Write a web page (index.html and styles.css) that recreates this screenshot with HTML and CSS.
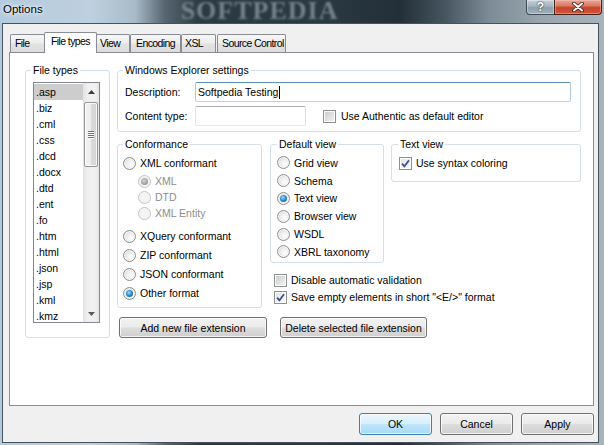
FILE: index.html
```html
<!DOCTYPE html>
<html>
<head>
<meta charset="utf-8">
<title>Options</title>
<link rel="stylesheet" href="styles.css">
</head>
<body>
<div class="window">
  <div class="titlebar">
    <span class="title">Options</span>
    <span class="wall-mark">SOFTPEDIA</span>
    <div class="caption-buttons">
      <span class="cap-btn help">?</span>
      <span class="cap-btn close">
        <svg width="12" height="10" viewBox="0 0 12 10"><path d="M2 1.5 L10 8.5 M10 1.5 L2 8.5" stroke="#3a1a14" stroke-width="3.6" stroke-linecap="round"/><path d="M2 1.5 L10 8.5 M10 1.5 L2 8.5" stroke="#ffffff" stroke-width="2" stroke-linecap="round"/></svg>
      </span>
    </div>
  </div>

  <div class="client">
    <div class="tabs">
      <div class="tab t-file">File</div>
      <div class="tab t-types active">File types</div>
      <div class="tab t-view">View</div>
      <div class="tab t-enc">Encoding</div>
      <div class="tab t-xsl">XSL</div>
      <div class="tab t-sc">Source Control</div>
    </div>

    <div class="panel">
      <div class="group g-files">
        <div class="group-title">File types</div>
        <div class="listbox">
          <ul class="items">
            <li class="sel">.asp</li>
            <li>.biz</li>
            <li>.cml</li>
            <li>.css</li>
            <li>.dcd</li>
            <li>.docx</li>
            <li>.dtd</li>
            <li>.ent</li>
            <li>.fo</li>
            <li>.htm</li>
            <li>.html</li>
            <li>.json</li>
            <li>.jsp</li>
            <li>.kml</li>
            <li>.kmz</li>
          </ul>
          <div class="scrollbar">
            <div class="sb-arrow">
              <svg width="7" height="4" viewBox="0 0 7 4"><path d="M0 4 L3.5 0 L7 4 Z" fill="#3c3c3c"/></svg>
            </div>
            <div class="sb-thumb">
              <span class="grip"></span><span class="grip"></span><span class="grip"></span><span class="grip"></span>
            </div>
            <div class="sb-track"></div>
            <div class="sb-arrow">
              <svg width="7" height="4" viewBox="0 0 7 4"><path d="M0 0 L7 0 L3.5 4 Z" fill="#5a5a5a"/></svg>
            </div>
          </div>
        </div>
      </div>

      <div class="right">
        <div class="group g-we">
          <div class="group-title">Windows Explorer settings</div>
          <div class="field-row r-desc">
            <span class="field-label">Description:</span>
            <div class="input focused">Softpedia Testing<span class="caret"></span></div>
          </div>
          <div class="field-row r-ctype">
            <span class="field-label">Content type:</span>
            <div class="input short"></div>
            <span class="check"></span>
            <span class="opt-text">Use Authentic as default editor</span>
          </div>
        </div>

        <div class="mid">
          <div class="group g-conf">
            <div class="group-title">Conformance</div>
            <div class="opt c1"><span class="radio"></span><span class="opt-text">XML conformant</span></div>
            <div class="opt sub c2"><span class="radio dis on"></span><span class="opt-text dim">XML</span></div>
            <div class="opt sub"><span class="radio dis"></span><span class="opt-text dim">DTD</span></div>
            <div class="opt sub"><span class="radio dis"></span><span class="opt-text dim">XML Entity</span></div>
            <div class="opt c5"><span class="radio"></span><span class="opt-text">XQuery conformant</span></div>
            <div class="opt c6"><span class="radio"></span><span class="opt-text">ZIP conformant</span></div>
            <div class="opt c6"><span class="radio"></span><span class="opt-text">JSON conformant</span></div>
            <div class="opt c6"><span class="radio on"></span><span class="opt-text">Other format</span></div>
          </div>

          <div class="views">
            <div class="views-row">
              <div class="group g-dv">
                <div class="group-title">Default view</div>
                <div class="dv-list">
                  <div class="opt dv"><span class="radio"></span><span class="opt-text">Grid view</span></div>
                  <div class="opt dv"><span class="radio"></span><span class="opt-text">Schema</span></div>
                  <div class="opt dv"><span class="radio on"></span><span class="opt-text">Text view</span></div>
                  <div class="opt dv"><span class="radio"></span><span class="opt-text">Browser view</span></div>
                  <div class="opt dv"><span class="radio"></span><span class="opt-text">WSDL</span></div>
                  <div class="opt dv"><span class="radio"></span><span class="opt-text">XBRL taxonomy</span></div>
                </div>
              </div>
              <div class="group g-tv">
                <div class="group-title">Text view</div>
                <div class="opt tv">
                  <span class="check on"><svg width="11" height="11" viewBox="0 0 11 11"><path d="M2 5.6 L4.4 8.3 L9 2.2" fill="none" stroke="#3d5391" stroke-width="1.8"/></svg></span>
                  <span class="opt-text">Use syntax coloring</span>
                </div>
              </div>
            </div>
            <div class="checks">
              <div class="opt ck"><span class="check"></span><span class="opt-text">Disable automatic validation</span></div>
              <div class="opt ck"><span class="check on"><svg width="11" height="11" viewBox="0 0 11 11"><path d="M2 5.6 L4.4 8.3 L9 2.2" fill="none" stroke="#3d5391" stroke-width="1.8"/></svg></span><span class="opt-text">Save empty elements in short "&lt;E/&gt;" format</span></div>
            </div>
          </div>
        </div>

        <div class="actions">
          <div class="btn b-add">Add new file extension</div>
          <div class="btn b-del">Delete selected file extension</div>
        </div>
      </div>
    </div>

    <div class="footer">
      <div class="btn dlg default">OK</div>
      <div class="btn dlg">Cancel</div>
      <div class="btn dlg">Apply</div>
    </div>
  </div>
</div>
</body>
</html>
```

FILE: styles.css
```css
* {
  box-sizing: border-box;
}

html, body {
  margin: 0;
  padding: 0;
}

body {
  width: 604px;
  height: 445px;
  overflow: hidden;
  font-family: "Liberation Sans", Arial, sans-serif;
  font-size: 10.5px;
  color: #000;
  background: linear-gradient(90deg, #b4cbde 0px, #bfd0de 90px, #a9bac8 135px, #56656f 165px, #2c3a43 200px, #2a3841 330px, #222f38 400px, #46555f 445px, #7d8c96 490px, #98a5ae 540px, #a8b4bb 604px);
}

.window {
  display: flex;
  flex-direction: column;
  height: 445px;
}

/* ---------- title bar ---------- */
.titlebar {
  height: 23px;
  flex: none;
  display: flex;
  align-items: flex-start;
  overflow: hidden;
}

.title {
  margin-left: 3px;
  line-height: 18px;
  font-size: 11.5px;
  color: #000;
  text-shadow: 0 0 6px #fff, 0 0 3px rgba(255, 255, 255, 0.9);
}

.wall-mark {
  margin-left: 138px;
  line-height: 21px;
  height: 22px;
  font-family: "Liberation Serif", serif;
  font-weight: bold;
  font-size: 26px;
  letter-spacing: 1px;
  color: #7f8e98;
  filter: blur(1.1px);
  opacity: 0.85;
}

.caption-buttons {
  margin-left: auto;
  margin-right: 2px;
  display: flex;
  height: 15px;
}

.cap-btn {
  height: 15px;
  display: flex;
  align-items: center;
  justify-content: center;
}

.help {
  width: 28px;
  border: 1px solid #3d4c58;
  border-top: 0;
  border-right: 0;
  border-radius: 0 0 0 4px;
  background: linear-gradient(#c5d0d8, #a6b4bf 45%, #8d9eab 55%, #a3b1bb);
  box-shadow: inset 0 0 0 1px rgba(255, 255, 255, 0.35);
  color: #fff;
  font-weight: bold;
  font-size: 12px;
  line-height: 14px;
  text-shadow: 0 0 2px #34424d, 0 0 1px #34424d;
}

.close {
  width: 48px;
  border: 1px solid #47221a;
  border-top: 0;
  border-radius: 0 0 4px 0;
  background: linear-gradient(#e8a796, #d97b63 40%, #c7432a 55%, #d0563b);
  box-shadow: inset 0 0 0 1px rgba(255, 210, 200, 0.4);
}

/* ---------- client ---------- */
.client {
  margin-left: 2px;
  width: 597px;
  height: 420px;
  border: 1px solid #46535c;
  background: #f0f0f0;
  display: flex;
  flex-direction: column;
}

.tabs {
  height: 28px;
  flex: none;
  display: flex;
  align-items: flex-end;
  padding-left: 7px;
  position: relative;
  z-index: 1;
}

.tab {
  height: 18px;
  border: 1px solid #898c95;
  border-bottom: 0;
  border-radius: 2px 2px 0 0;
  background: linear-gradient(#f7f7f7, #ededed 45%, #e2e2e2 55%, #dcdcdc);
  line-height: 17px;
  letter-spacing: -0.6px;
  white-space: nowrap;
  overflow: hidden;
  flex: none;
}

.tab.active {
  height: 21px;
  margin-bottom: -1px;
  background: #fff;
  position: relative;
  z-index: 2;
}

.t-file  { width: 35px; padding-left: 4px; }
.t-types { width: 53px; padding-left: 6px; margin-left: -1px; }
.t-view  { width: 34px; padding-left: 3px; margin-left: -1px; }
.t-enc   { width: 51px; padding-left: 5px; }
.t-xsl   { width: 35px; padding-left: 3px; }
.t-sc    { width: 69px; padding-left: 4px; margin-left: 1px; }

.panel {
  margin-left: 6px;
  width: 585px;
  height: 354px;
  flex: none;
  border: 1px solid #898c95;
  background: #fff;
  display: flex;
  align-items: flex-start;
  padding: 17px 0 0 15px;
}

/* ---------- group boxes ---------- */
.group {
  border: 1px solid #d5dfe5;
  border-radius: 3px;
  flex: none;
}

.group-title {
  margin-top: -7px;
  margin-left: -2px;
  height: 13px;
  line-height: 13px;
  padding: 0 2px;
  background: #fff;
  width: max-content;
  white-space: nowrap;
}

.g-files {
  width: 85px;
  height: 268px;
  padding-left: 7px;
}

.listbox {
  margin-top: 5px;
  width: 67px;
  height: 241px;
  border: 1px solid #828790;
  display: flex;
  overflow: hidden;
}

.items {
  list-style: none;
  margin: 0;
  padding: 1px 0 0 0;
  width: 49px;
  flex: none;
  overflow: hidden;
}

.items li {
  height: 16px;
  line-height: 16px;
  padding-left: 2px;
  white-space: nowrap;
}

.items li.sel {
  background: #cdcdcd;
}

.scrollbar {
  width: 16px;
  flex: none;
  display: flex;
  flex-direction: column;
  background: linear-gradient(90deg, #e3e3e3, #efefef 30%, #f1f1f1 70%, #e6e6e6);
}

.sb-arrow {
  height: 17px;
  flex: none;
  display: flex;
  align-items: center;
  justify-content: center;
  padding-left: 1px;
}

.sb-thumb {
  margin: 2px 1px 0 1px;
  height: 65px;
  flex: none;
  border: 1px solid #979797;
  border-radius: 2px;
  background: linear-gradient(90deg, #f4f4f4, #ececec 50%, #dcdcdc 51%, #d3d3d3);
  box-shadow: inset 0 0 0 1px rgba(255, 255, 255, 0.8);
  display: flex;
  flex-direction: column;
  align-items: center;
  justify-content: center;
  gap: 1px;
}

.grip {
  width: 6px;
  height: 1px;
  background: #6f6f6f;
  box-shadow: 0 1px 0 #fff;
}

.sb-track {
  flex: 1;
}

/* ---------- right side ---------- */
.right {
  margin-left: 7px;
  width: 464px;
  flex: none;
}

.g-we {
  width: 464px;
  height: 62px;
  padding: 0 10px 0 7px;
}

.field-row {
  display: flex;
  align-items: center;
  height: 20px;
}

.r-desc {
  margin-top: 5px;
}

.r-ctype {
  margin-top: 4px;
}

.field-label {
  width: 70px;
  flex: none;
  white-space: nowrap;
}

.input {
  height: 20px;
  flex: none;
  border: 1px solid;
  border-color: #abadb3 #dbdfe6 #e3e9ef #e2e3ea;
  border-radius: 2px;
  background: #fff;
  display: flex;
  align-items: center;
  padding-left: 2px;
  white-space: nowrap;
}

.input.focused {
  width: 376px;
  border-color: #5f8fbd #a9c9e4 #b6d4ea #a9c9e4;
}

.input.short {
  width: 111px;
}

.caret {
  width: 1px;
  height: 13px;
  background: #000;
  margin-left: 1px;
}

.r-ctype .check {
  margin-left: 17px;
}

.r-ctype .opt-text {
  margin-left: 5px;
}

/* ---------- options ---------- */
.opt {
  display: flex;
  align-items: center;
  height: 16px;
  white-space: nowrap;
}

.opt-text {
  margin-left: 4px;
}

.opt-text.dim {
  color: #8d8d8d;
}

.radio {
  width: 13px;
  height: 13px;
  flex: none;
  border-radius: 50%;
  border: 1px solid #8e8f8f;
  background: radial-gradient(circle at 62% 62%, #fdfdfd 0%, #efefef 40%, #cfd0d1 100%);
  box-shadow: inset 0 0 0 1px #f5f5f5;
  display: flex;
  align-items: center;
  justify-content: center;
}

.radio.on::after {
  content: "";
  width: 7px;
  height: 7px;
  border-radius: 50%;
  background: radial-gradient(circle at 42% 38%, #a9dcfa 0%, #2f8fd2 45%, #0f4c7d 100%);
}

.radio.dis {
  border-color: #c4c4c4;
  background: #f4f4f4;
  box-shadow: none;
}

.radio.dis.on::after {
  background: radial-gradient(circle at 42% 38%, #d6d6d6 0%, #a3a3a3 55%, #8a8a8a 100%);
}

.check {
  width: 13px;
  height: 13px;
  flex: none;
  border: 1px solid #8e8f8f;
  background: linear-gradient(135deg, #c8cacc, #f4f4f5);
  box-shadow: inset 0 0 0 1px #fff;
  display: flex;
  align-items: center;
  justify-content: center;
}

.check.on {
  background: linear-gradient(135deg, #e2e3e4, #fbfbfb);
}

.g-conf {
  width: 145px;
  height: 164px;
  padding-left: 5px;
}

.g-conf .group-title {
  margin-left: 0;
}

.c1 { margin-top: 4px; }
.c2 { margin-top: 2px; }
.sub { padding-left: 15px; }
.c5 { margin-top: 7px; }
.c6 { margin-top: 3px; }

.mid {
  margin-top: 12px;
  display: flex;
  align-items: flex-start;
}

.views {
  margin-left: 8px;
  width: 311px;
  flex: none;
}

.views-row {
  display: flex;
  align-items: flex-start;
}

.g-dv {
  width: 114px;
  height: 119px;
  padding-left: 6px;
}

.g-dv .group-title {
  margin-left: 0;
}

.dv-list {
  margin-top: 3px;
}

.opt.dv {
  height: 17.8px;
}

.g-tv {
  margin-left: 7px;
  width: 190px;
  height: 38px;
  padding-left: 7px;
}

.g-tv .group-title {
  margin-left: -1px;
}

.opt.tv {
  margin-top: 4px;
}

.checks {
  margin-top: 9px;
  padding-left: 4px;
}

.opt.ck + .opt.ck {
  margin-top: 1px;
}

/* ---------- buttons ---------- */
.btn {
  height: 21px;
  flex: none;
  border: 1px solid #707070;
  border-radius: 3px;
  background: linear-gradient(#f2f2f2 0%, #ebebeb 48%, #dddddd 52%, #cfcfcf 100%);
  box-shadow: inset 0 0 0 1px rgba(255, 255, 255, 0.75);
  display: flex;
  align-items: center;
  justify-content: center;
  white-space: nowrap;
}

.actions {
  margin-top: 9px;
  display: flex;
}

.b-add {
  margin-left: 2px;
  width: 148px;
}

.b-del {
  margin-left: 13px;
  width: 147px;
}

.footer {
  margin-top: 7px;
  display: flex;
  justify-content: flex-end;
  gap: 8px;
  padding-right: 4px;
}

.btn.dlg {
  width: 73px;
  height: 22px;
}

.btn.default {
  border-color: #3c7fb1;
  background: linear-gradient(#eaf6fd 0%, #d9f0fc 48%, #bee6fd 52%, #a7d9f5 100%);
  box-shadow: inset 0 0 0 1px rgba(255, 255, 255, 0.7);
}
```
